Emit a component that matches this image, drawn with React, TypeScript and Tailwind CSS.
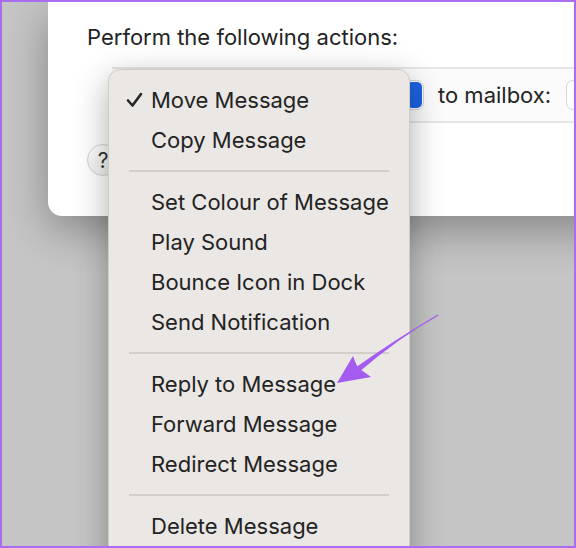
const MENU_GROUPS: string[][] = [
  ["Move Message", "Copy Message"],
  ["Set Colour of Message", "Play Sound", "Bounce Icon in Dock", "Send Notification"],
  ["Reply to Message", "Forward Message", "Redirect Message"],
  ["Delete Message"],
];

const SELECTED = "Move Message";

export default function App() {
  return (
    <div
      className="relative h-[548px] w-[576px] overflow-hidden border-2 border-[#a86df0] bg-[#c5c5c5] text-[#232323]"
      style={{ fontFamily: "Inter, 'Noto Sans', sans-serif" }}
    >
      <RuleDialog />
      <ActionMenu />
      <Annotation />
    </div>
  );
}

function RuleDialog() {
  return (
    <div className="ml-[46px] flex h-[214px] w-[640px] flex-col rounded-bl-[14px] bg-white pt-[21px] shadow-[0_14px_44px_rgba(0,0,0,0.32)]">
      <p className="ml-[39px] whitespace-nowrap text-[22px] leading-[28px]">Perform the following actions:</p>
      <div className="ml-[64px] mt-[16px] flex h-[56px] items-center whitespace-nowrap border-y-2 border-[#e6e6e6] bg-[#fbfbfb]">
        <div className="ml-[10px] flex h-[30px] w-[302px] shrink-0 items-center justify-end rounded-[7px] border border-[#d6d6d6] bg-white pr-[1px]">
          <span className="h-[26px] w-[15px] rounded-[5px] bg-[#1d63e3]" />
        </div>
        <span className="ml-[14px] shrink-0 text-[22px]">to mailbox:</span>
        <div className="ml-[15px] h-[30px] w-[60px] shrink-0 rounded-[7px] border border-[#d6d6d6] bg-white" />
      </div>
      <button className="ml-[39px] mt-[21px] flex h-[32px] w-[32px] items-center justify-center rounded-full border border-[#d2d2d2] bg-gradient-to-b from-white to-[#f1f1f1] text-[21px] leading-none text-[#333]">
        ?
      </button>
    </div>
  );
}

function ActionMenu() {
  return (
    <div className="absolute left-[106px] top-[67px] w-[302px] rounded-t-[12px] border border-[#cfcbc7] bg-[#eae7e4] pb-[40px] pt-[10px] shadow-[0_10px_34px_rgba(0,0,0,0.32)]">
      {MENU_GROUPS.map((group, index) => (
        <div key={index}>
          {index > 0 && (
            <div className="flex h-[22px] items-center px-[20px]">
              <div className="h-[2px] w-full bg-[#d2cecb]" />
            </div>
          )}
          {group.map((label) => (
            <div key={label} className="flex h-[40px] items-center whitespace-nowrap text-[22px]">
              <span className="flex w-[42px] justify-end pr-[8px]">
                {label === SELECTED && <CheckMark />}
              </span>
              <span>{label}</span>
            </div>
          ))}
        </div>
      ))}
    </div>
  );
}

function CheckMark() {
  return (
    <svg width="17" height="16" viewBox="0 0 17 16" fill="none">
      <path d="M2 8.5 L6.5 13.5 L15 2" stroke="#262626" strokeWidth="2.6" strokeLinecap="round" strokeLinejoin="round" />
    </svg>
  );
}

function Annotation() {
  return (
    <svg className="pointer-events-none absolute left-[-2px] top-[-2px]" width="576" height="548" viewBox="0 0 576 548">
      <path d="M438.6 315.4 Q398 338 357.5 373.2 L354.2 368.6 Q396 339 437.8 314.6 Z" fill="#a35bf0" />
      <path d="M337 383 L353 356 Q356 365 359 368.5 Q365 372.5 371 377 Z" fill="#a35bf0" />
    </svg>
  );
}
